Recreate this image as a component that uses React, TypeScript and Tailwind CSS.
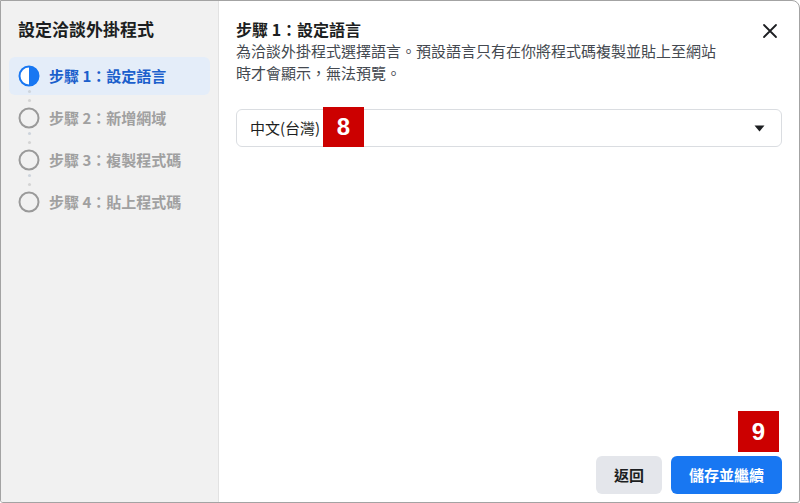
import React from "react";

const FONT = { fontFamily: '"Noto Sans CJK TC", "Noto Sans", Roboto, sans-serif' };

function StepIcon({ active }: { active: boolean }) {
  if (active) {
    return (
      <svg width="22" height="22" viewBox="0 0 22 22">
        <circle cx="11" cy="11" r="9.5" fill="#ffffff" stroke="#1877f2" strokeWidth="2" />
        <path d="M11 1.5 A9.5 9.5 0 0 1 11 20.5 Z" fill="#1877f2" />
      </svg>
    );
  }
  return (
    <svg width="22" height="22" viewBox="0 0 22 22">
      <circle cx="11" cy="11" r="9.5" fill="none" stroke="#9a9a9a" strokeWidth="2" />
    </svg>
  );
}

const steps = [
  "步驟 1：設定語言",
  "步驟 2：新增網域",
  "步驟 3：複製程式碼",
  "步驟 4：貼上程式碼",
];

export default function App() {
  return (
    <div className="w-[800px] h-[503px] bg-white" style={FONT}>
      <div className="w-full h-full flex border border-[#a3a3a3] rounded-tr-[8px] rounded-b-[3px] overflow-hidden">
        {/* Sidebar */}
        <div className="w-[218px] shrink-0 bg-[#f1f1f1] border-r border-[#e2e2e2] flex flex-col">
          <div className="pt-[16px] px-[17px] text-[17px] leading-[24px] font-bold text-[#1c1e21]">
            設定洽談外掛程式
          </div>
          <div className="mt-[16px] mx-[8px] flex flex-col gap-[4px]">
            {steps.map((s, i) => (
              <div
                key={s}
                className={`relative h-[38px] rounded-[6px] flex items-center pl-[9px] gap-[9px] ${
                  i === 0 ? "bg-[#e4edf9]" : ""
                }`}
              >
                <StepIcon active={i === 0} />
                <span
                  className={`text-[15px] font-bold leading-[20px] ${
                    i === 0 ? "text-[#1b5fcc]" : "text-[#a0a0a0]"
                  }`}
                >
                  {s}
                </span>
                {i < steps.length - 1 && (
                  <div className="absolute left-[19px] top-[33px] flex flex-col items-center gap-[6px]">
                    <span className="w-[3px] h-[3px] rounded-full bg-[#cdd4dc]" />
                    <span className="w-[3px] h-[3px] rounded-full bg-[#d4d4d4]" />
                  </div>
                )}
              </div>
            ))}
          </div>
        </div>

        {/* Main */}
        <div className="relative flex-1 flex flex-col px-[17px] pt-[17px] pb-[8px]">
          <div className="flex items-start justify-between">
            <div>
              <div className="text-[16px] font-bold leading-[22px] text-[#1c1e21]">步驟 1：設定語言</div>
              <div className="text-[15px] leading-[22px] text-[#444950]">
                為洽談外掛程式選擇語言。預設語言只有在你將程式碼複製並貼上至網站
                <br />
                時才會顯示，無法預覽。
              </div>
            </div>
            <button className="mt-[3px] mr-[2px] w-[20px] h-[20px] flex items-center justify-center">
              <svg width="16" height="16" viewBox="0 0 16 16">
                <path d="M2 2 L14 14 M14 2 L2 14" stroke="#1c1e21" strokeWidth="1.8" strokeLinecap="round" />
              </svg>
            </button>
          </div>

          <div className="relative mt-[25px] h-[38px] border border-[#dadde1] rounded-[6px] flex items-center justify-between pl-[13px] pr-[16px]">
            <span className="text-[15px] text-[#1c1e21]">中文(台灣)</span>
            <svg width="11" height="7" viewBox="0 0 11 7">
              <path d="M0.5 0.5 L10.5 0.5 L5.5 6.5 Z" fill="#1c1e21" />
            </svg>
            <div className="absolute left-[86px] top-[-3px] w-[41px] h-[40px] bg-[#cc0000] text-white text-[24px] font-bold flex items-center justify-center" style={{ fontFamily: '"Liberation Sans", Arial, sans-serif' }}>
              8
            </div>
          </div>

          <div className="flex-1" />

          <div className="relative flex justify-end gap-[9px]">
            <div className="absolute right-[3px] top-[-45px] w-[41px] h-[41px] bg-[#cc0000] text-white text-[24px] font-bold flex items-center justify-center" style={{ fontFamily: '"Liberation Sans", Arial, sans-serif' }}>
              9
            </div>
            <button className="h-[38px] w-[66px] rounded-[6px] bg-[#e4e6eb] text-[15px] font-bold text-[#1c1e21]">
              返回
            </button>
            <button className="h-[38px] w-[111px] rounded-[6px] bg-[#1877f2] text-[15px] font-bold text-white">
              儲存並繼續
            </button>
          </div>
        </div>
      </div>
    </div>
  );
}
